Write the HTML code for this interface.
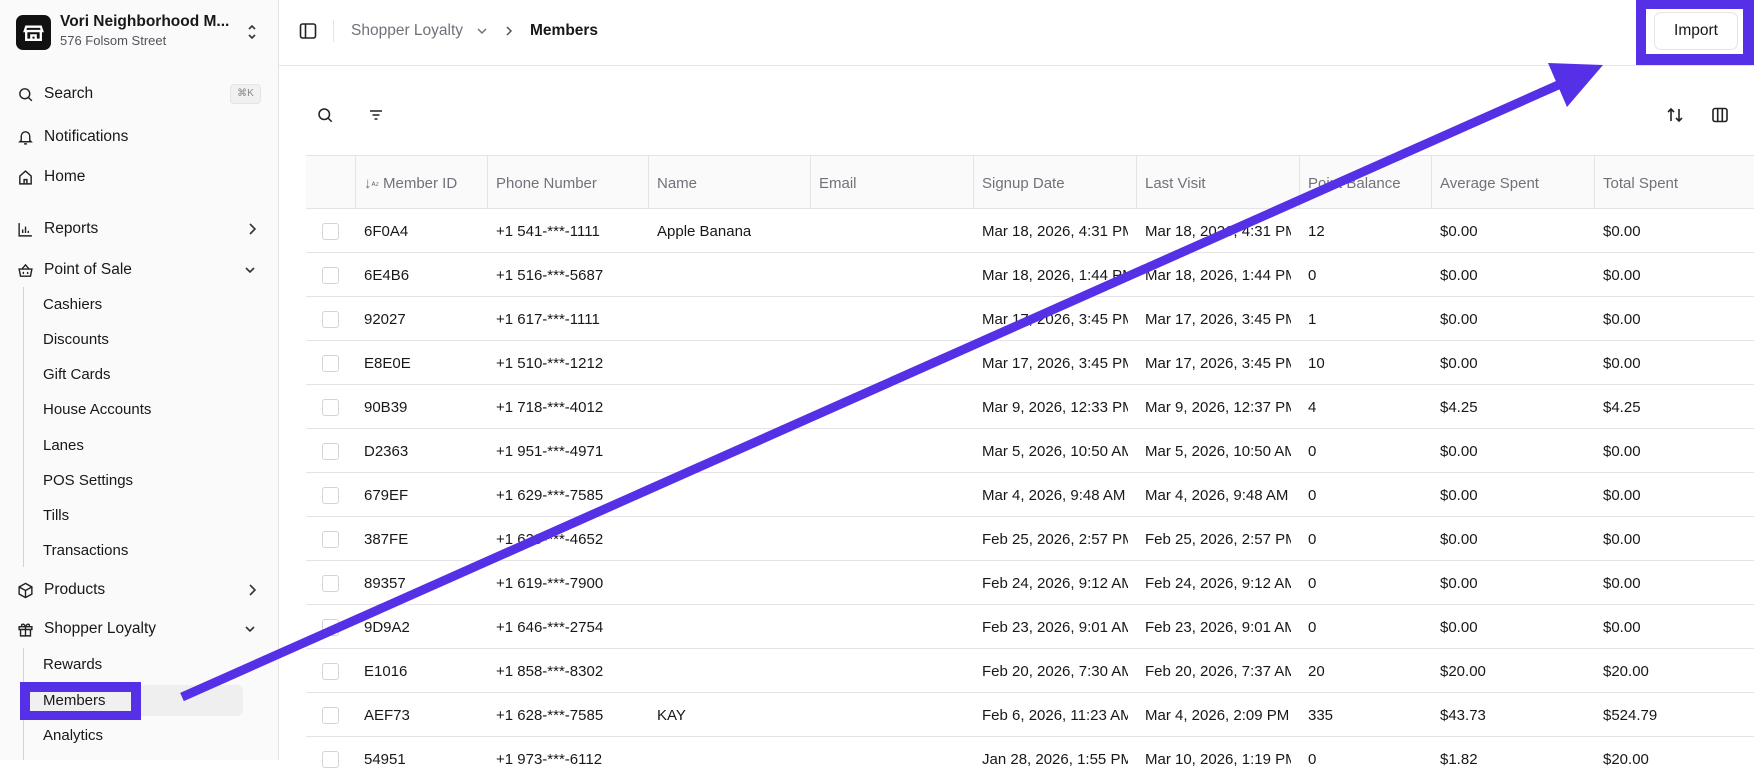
<!DOCTYPE html>
<html><head><meta charset="utf-8"><style>
*{box-sizing:border-box;margin:0;padding:0}
body{width:1754px;height:760px;overflow:hidden;background:#fff;font-family:"Liberation Sans",sans-serif;color:#18181b;position:relative}
.sb{position:absolute;left:0;top:0;width:279px;height:760px;background:#fafafa;border-right:1px solid #e4e4e7}
.it{position:absolute;left:17px;font-size:15.5px;display:flex;align-items:center;gap:10px;height:20px;line-height:20px}
.it svg{width:17px;height:17px;flex:none}
.sub{position:absolute;left:43px;font-size:15px;line-height:20px}
.abs{position:absolute}
.hdr{position:absolute;left:306px;top:155px;width:1448px;height:54px;background:#fafafa;border-top:1px solid #e4e4e7;border-bottom:1px solid #e4e4e7}
.c{position:absolute;font-size:15px;white-space:nowrap;overflow:hidden}
.hc{color:#71717a;top:19px}
.rl{position:absolute;left:306px;width:1448px;height:1px;background:#e4e4e7}
.cb{position:absolute;left:322px;width:17px;height:17px;border:1px solid #d4d4d8;border-radius:3px;background:#fff}
</style></head><body>
<div class="sb">
 <div class="abs" style="left:16px;top:15px;width:35px;height:35px;background:#111;border-radius:7px">
  <svg viewBox="0 0 24 24" width="35" height="35" fill="none" stroke="#fff" stroke-width="1.6"><path d="M7 8h10l1 3H6z M7 11v6h10v-6 M10.5 17v-3h3v3"/></svg>
 </div>
 <div class="abs" style="left:60px;top:13px;font-size:15.5px;font-weight:bold">Vori Neighborhood M...</div>
 <div class="abs" style="left:60px;top:33px;font-size:13px;color:#52525b">576 Folsom Street</div>
 <svg class="abs" style="left:246px;top:23px" width="12" height="18" viewBox="0 0 12 18" fill="none" stroke="#333" stroke-width="1.6"><path d="M3 6l3-3 3 3M3 12l3 3 3-3"/></svg>
 <div class="it" style="top:84px"><svg viewBox="0 0 24 24" fill="none" stroke="#222" stroke-width="2"><circle cx="11" cy="11" r="7"/><path d="M16 16l5 5"/></svg>Search</div>
 <div class="abs" style="left:230px;top:84px;width:31px;height:20px;border:1px solid #e4e4e7;background:#f1f1f2;border-radius:4px;font-size:10px;color:#888;text-align:center;line-height:18px">⌘K</div>
 <div class="it" style="top:127px"><svg viewBox="0 0 24 24" fill="none" stroke="#222" stroke-width="2"><path d="M6 16V10a6 6 0 0112 0v6l2 2H4z M10 21h4"/></svg>Notifications</div>
 <div class="it" style="top:167px"><svg viewBox="0 0 24 24" fill="none" stroke="#222" stroke-width="2"><path d="M4 21V10l8-7 8 7v11z M10 21v-6h4v6"/></svg>Home</div>
 <div class="it" style="top:219px"><svg viewBox="0 0 24 24" fill="none" stroke="#222" stroke-width="2"><path d="M3 3v18h18 M8 17v-5 M12 17V8 M16 17v-3"/></svg>Reports</div>
 <svg class="abs" style="left:247px;top:222px" width="10" height="14" viewBox="0 0 10 14" fill="none" stroke="#333" stroke-width="1.6"><path d="M3 2l5 5-5 5"/></svg>
 <div class="it" style="top:260px"><svg viewBox="0 0 24 24" fill="none" stroke="#222" stroke-width="2"><path d="M3 10h18l-2 10H5z M7 10l5-6 5 6 M9 14v3 M15 14v3"/></svg>Point of Sale</div>
 <svg class="abs" style="left:244px;top:265px" width="12" height="10" viewBox="0 0 12 10" fill="none" stroke="#333" stroke-width="1.6"><path d="M2 3l4 4 4-4"/></svg>
 <div class="abs" style="left:23px;top:287px;width:1px;height:280px;background:#d4d4d8"></div>
 <div class="sub" style="top:295px">Cashiers</div>
 <div class="sub" style="top:330px">Discounts</div>
 <div class="sub" style="top:365px">Gift Cards</div>
 <div class="sub" style="top:400px">House Accounts</div>
 <div class="sub" style="top:436px">Lanes</div>
 <div class="sub" style="top:471px">POS Settings</div>
 <div class="sub" style="top:506px">Tills</div>
 <div class="sub" style="top:541px">Transactions</div>
 <div class="it" style="top:580px"><svg viewBox="0 0 24 24" fill="none" stroke="#222" stroke-width="2"><path d="M12 2l9 5v10l-9 5-9-5V7z M3 7l9 5 9-5 M12 12v10"/></svg>Products</div>
 <svg class="abs" style="left:247px;top:583px" width="10" height="14" viewBox="0 0 10 14" fill="none" stroke="#333" stroke-width="1.6"><path d="M3 2l5 5-5 5"/></svg>
 <div class="it" style="top:619px"><svg viewBox="0 0 24 24" fill="none" stroke="#222" stroke-width="2"><path d="M3 8h18v4H3z M5 12v9h14v-9 M12 8v13 M12 8c-2-5-7-4-5-1 M12 8c2-5 7-4 5-1"/></svg>Shopper Loyalty</div>
 <svg class="abs" style="left:244px;top:624px" width="12" height="10" viewBox="0 0 12 10" fill="none" stroke="#333" stroke-width="1.6"><path d="M2 3l4 4 4-4"/></svg>
 <div class="abs" style="left:23px;top:648px;width:1px;height:112px;background:#d4d4d8"></div>
 <div class="sub" style="top:655px">Rewards</div>
 <div class="abs" style="left:30px;top:685px;width:213px;height:31px;background:#efeff0;border-radius:6px"></div>
 <div class="abs" style="left:20px;top:682px;width:121px;height:38px;background:#5530e6"></div>
 <div class="abs" style="left:30px;top:692px;width:101px;height:19px;background:#f0f0f1"></div>
 <div class="sub" style="top:691px">Members</div>
 <div class="sub" style="top:726px">Analytics</div>
</div>

<div class="abs" style="left:279px;top:65px;width:1475px;height:1px;background:#e4e4e7"></div>
<svg class="abs" style="left:299px;top:22px" width="18" height="18" viewBox="0 0 18 18" fill="none" stroke="#222" stroke-width="1.6"><rect x="1.5" y="2" width="15" height="14" rx="2"/><path d="M6.5 2v14"/></svg>
<div class="abs" style="left:333px;top:20px;width:1px;height:22px;background:#e4e4e7"></div>
<div class="abs" style="left:351px;top:22px;font-size:15.5px;color:#71717a">Shopper Loyalty</div>
<svg class="abs" style="left:476px;top:27px" width="12" height="9" viewBox="0 0 12 9" fill="none" stroke="#71717a" stroke-width="1.5"><path d="M2 2l4 4 4-4"/></svg>
<svg class="abs" style="left:505px;top:25px" width="8" height="12" viewBox="0 0 8 12" fill="none" stroke="#555" stroke-width="1.5"><path d="M2 2l4 4-4 4"/></svg>
<div class="abs" style="left:530px;top:22px;font-size:15.5px;font-weight:bold;color:#18181b">Members</div>
<div class="abs" style="left:1636px;top:0;width:118px;height:65px;background:#5530e6"></div>
<div class="abs" style="left:1646px;top:9px;width:97px;height:45px;background:#fff"></div>
<div class="abs" style="left:1654px;top:12px;width:84px;height:38px;border:1px solid #e4e4e7;border-radius:7px;font-size:15.5px;text-align:center;line-height:36px">Import</div>

<svg class="abs" style="left:316px;top:106px" width="18" height="18" viewBox="0 0 24 24" fill="none" stroke="#222" stroke-width="2"><circle cx="11" cy="11" r="7"/><path d="M16 16l5 5"/></svg>
<svg class="abs" style="left:368px;top:107px" width="16" height="16" viewBox="0 0 16 16" fill="none" stroke="#222" stroke-width="1.6"><path d="M2 4h12M4.5 8h7M6.5 12h3"/></svg>
<svg class="abs" style="left:1666px;top:106px" width="18" height="18" viewBox="0 0 18 18" fill="none" stroke="#222" stroke-width="1.6"><path d="M5 15V3M2 6l3-3 3 3M13 3v12M10 12l3 3 3-3"/></svg>
<svg class="abs" style="left:1711px;top:106px" width="18" height="18" viewBox="0 0 18 18" fill="none" stroke="#222" stroke-width="1.6"><rect x="2" y="2.5" width="14" height="13" rx="2"/><path d="M6.7 2.5v13M11.3 2.5v13"/></svg>

<div class="hdr">
 <div class="abs" style="left:49px;top:0;width:1px;height:53px;background:#e4e4e7"></div>
 <div class="abs" style="left:181px;top:0;width:1px;height:53px;background:#e4e4e7"></div>
 <div class="abs" style="left:342px;top:0;width:1px;height:53px;background:#e4e4e7"></div>
 <div class="abs" style="left:504px;top:0;width:1px;height:53px;background:#e4e4e7"></div>
 <div class="abs" style="left:667px;top:0;width:1px;height:53px;background:#e4e4e7"></div>
 <div class="abs" style="left:830px;top:0;width:1px;height:53px;background:#e4e4e7"></div>
 <div class="abs" style="left:993px;top:0;width:1px;height:53px;background:#e4e4e7"></div>
 <div class="abs" style="left:1125px;top:0;width:1px;height:53px;background:#e4e4e7"></div>
 <div class="abs" style="left:1288px;top:0;width:1px;height:53px;background:#e4e4e7"></div>
 <div class="c hc" style="left:58px">↓<span style="font-size:9px">ᴬᶻ</span> Member ID</div>
 <div class="c hc" style="left:190px">Phone Number</div>
 <div class="c hc" style="left:351px">Name</div>
 <div class="c hc" style="left:513px">Email</div>
 <div class="c hc" style="left:676px">Signup Date</div>
 <div class="c hc" style="left:839px">Last Visit</div>
 <div class="c hc" style="left:1002px">Point Balance</div>
 <div class="c hc" style="left:1134px">Average Spent</div>
 <div class="c hc" style="left:1297px">Total Spent</div>
</div>

<div style="position:absolute;left:0;top:0">
<div class="rl" style="top:252px"></div><div class="rl" style="top:296px"></div><div class="rl" style="top:340px"></div><div class="rl" style="top:384px"></div><div class="rl" style="top:428px"></div><div class="rl" style="top:472px"></div><div class="rl" style="top:516px"></div><div class="rl" style="top:560px"></div><div class="rl" style="top:604px"></div><div class="rl" style="top:648px"></div><div class="rl" style="top:692px"></div><div class="rl" style="top:736px"></div>
</div>

<style>
.r{position:absolute;left:0;width:1754px;height:44px}
.r .cb{top:14px}
.r .c{top:14px}
.a{left:364px}.b{left:496px}.n{left:657px}.s{left:982px;width:146px}.l{left:1145px;width:146px}.p{left:1308px}.v{left:1440px}.t{left:1603px}
</style>
<div class="r" style="top:209px"><div class="cb"></div><div class="c a">6F0A4</div><div class="c b">+1 541-***-1111</div><div class="c n">Apple Banana</div><div class="c s">Mar 18, 2026, 4:31 PM</div><div class="c l">Mar 18, 2026, 4:31 PM</div><div class="c p">12</div><div class="c v">$0.00</div><div class="c t">$0.00</div></div>
<div class="r" style="top:253px"><div class="cb"></div><div class="c a">6E4B6</div><div class="c b">+1 516-***-5687</div><div class="c s">Mar 18, 2026, 1:44 PM</div><div class="c l">Mar 18, 2026, 1:44 PM</div><div class="c p">0</div><div class="c v">$0.00</div><div class="c t">$0.00</div></div>
<div class="r" style="top:297px"><div class="cb"></div><div class="c a">92027</div><div class="c b">+1 617-***-1111</div><div class="c s">Mar 17, 2026, 3:45 PM</div><div class="c l">Mar 17, 2026, 3:45 PM</div><div class="c p">1</div><div class="c v">$0.00</div><div class="c t">$0.00</div></div>
<div class="r" style="top:341px"><div class="cb"></div><div class="c a">E8E0E</div><div class="c b">+1 510-***-1212</div><div class="c s">Mar 17, 2026, 3:45 PM</div><div class="c l">Mar 17, 2026, 3:45 PM</div><div class="c p">10</div><div class="c v">$0.00</div><div class="c t">$0.00</div></div>
<div class="r" style="top:385px"><div class="cb"></div><div class="c a">90B39</div><div class="c b">+1 718-***-4012</div><div class="c s">Mar 9, 2026, 12:33 PM</div><div class="c l">Mar 9, 2026, 12:37 PM</div><div class="c p">4</div><div class="c v">$4.25</div><div class="c t">$4.25</div></div>
<div class="r" style="top:429px"><div class="cb"></div><div class="c a">D2363</div><div class="c b">+1 951-***-4971</div><div class="c s">Mar 5, 2026, 10:50 AM</div><div class="c l">Mar 5, 2026, 10:50 AM</div><div class="c p">0</div><div class="c v">$0.00</div><div class="c t">$0.00</div></div>
<div class="r" style="top:473px"><div class="cb"></div><div class="c a">679EF</div><div class="c b">+1 629-***-7585</div><div class="c s">Mar 4, 2026, 9:48 AM</div><div class="c l">Mar 4, 2026, 9:48 AM</div><div class="c p">0</div><div class="c v">$0.00</div><div class="c t">$0.00</div></div>
<div class="r" style="top:517px"><div class="cb"></div><div class="c a">387FE</div><div class="c b">+1 629-***-4652</div><div class="c s">Feb 25, 2026, 2:57 PM</div><div class="c l">Feb 25, 2026, 2:57 PM</div><div class="c p">0</div><div class="c v">$0.00</div><div class="c t">$0.00</div></div>
<div class="r" style="top:561px"><div class="cb"></div><div class="c a">89357</div><div class="c b">+1 619-***-7900</div><div class="c s">Feb 24, 2026, 9:12 AM</div><div class="c l">Feb 24, 2026, 9:12 AM</div><div class="c p">0</div><div class="c v">$0.00</div><div class="c t">$0.00</div></div>
<div class="r" style="top:605px"><div class="cb"></div><div class="c a">9D9A2</div><div class="c b">+1 646-***-2754</div><div class="c s">Feb 23, 2026, 9:01 AM</div><div class="c l">Feb 23, 2026, 9:01 AM</div><div class="c p">0</div><div class="c v">$0.00</div><div class="c t">$0.00</div></div>
<div class="r" style="top:649px"><div class="cb"></div><div class="c a">E1016</div><div class="c b">+1 858-***-8302</div><div class="c s">Feb 20, 2026, 7:30 AM</div><div class="c l">Feb 20, 2026, 7:37 AM</div><div class="c p">20</div><div class="c v">$20.00</div><div class="c t">$20.00</div></div>
<div class="r" style="top:693px"><div class="cb"></div><div class="c a">AEF73</div><div class="c b">+1 628-***-7585</div><div class="c n">KAY</div><div class="c s">Feb 6, 2026, 11:23 AM</div><div class="c l">Mar 4, 2026, 2:09 PM</div><div class="c p">335</div><div class="c v">$43.73</div><div class="c t">$524.79</div></div>
<div class="r" style="top:737px"><div class="cb"></div><div class="c a">54951</div><div class="c b">+1 973-***-6112</div><div class="c s">Jan 28, 2026, 1:55 PM</div><div class="c l">Mar 10, 2026, 1:19 PM</div><div class="c p">0</div><div class="c v">$1.82</div><div class="c t">$20.00</div></div>

<svg class="abs" style="left:0;top:0" width="1754" height="760" viewBox="0 0 1754 760">
 <line x1="182" y1="697" x2="1565" y2="82" stroke="#5530e6" stroke-width="9"/>
 <polygon points="1548,63 1603,65 1567,107" fill="#5530e6"/>
</svg>
</body></html>
